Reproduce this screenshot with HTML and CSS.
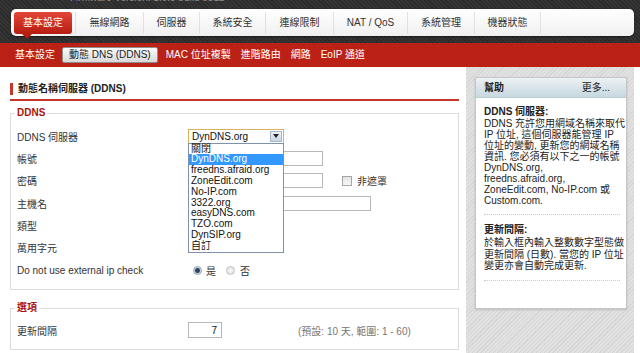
FILE: index.html
```html
<!DOCTYPE html>
<html lang="zh-Hant">
<head>
    <meta charset="UTF-8">
    <meta name="viewport" content="width=device-width, initial-scale=1.0">
    <title>動態 DNS (DDNS)</title>
    <link rel="stylesheet" href="styles.css">
</head>
<body>
    <div class="top">
        <div class="fw"><span>Firmware Version: 1.0.5 build 0812</span></div>
        <ul class="nav">
            <li class="on">基本設定</li>
            <li>無線網路</li>
            <li>伺服器</li>
            <li>系統安全</li>
            <li>連線限制</li>
            <li>NAT / QoS</li>
            <li>系統管理</li>
            <li>機器狀態</li>
        </ul>
    </div>

    <div class="subnav">
        <a href="#">基本設定</a>
        <a href="#" class="on">動態 DNS (DDNS)</a>
        <a href="#">MAC 位址複製</a>
        <a href="#">進階路由</a>
        <a href="#">網路</a>
        <a href="#">EoIP 通道</a>
    </div>

    <div class="page">
        <div class="main">
            <h2 class="title"><span>動態名稱伺服器 (DDNS)</span></h2>

            <fieldset>
                <legend>DDNS</legend>
                <div class="row">
                    <label>DDNS 伺服器</label>
                    <div class="select">
                        <span class="select-text">DynDNS.org</span>
                        <span class="select-btn"></span>
                        <!-- open list of the select -->
                        <ul class="dropdown">
                            <li>關閉</li>
                            <li class="sel">DynDNS.org</li>
                            <li>freedns.afraid.org</li>
                            <li>ZoneEdit.com</li>
                            <li>No-IP.com</li>
                            <li>3322.org</li>
                            <li>easyDNS.com</li>
                            <li>TZO.com</li>
                            <li>DynSIP.org</li>
                            <li>自訂</li>
                        </ul>
                    </div>
                </div>
                <div class="row">
                    <label>帳號</label>
                    <input class="txt" type="text">
                </div>
                <div class="row">
                    <label>密碼</label>
                    <input class="txt" type="password">
                    <input class="chk" type="checkbox">
                    <span>非遮罩</span>
                </div>
                <div class="row">
                    <label>主機名</label>
                    <input class="txt wide" type="text">
                </div>
                <div class="row">
                    <label>類型</label>
                </div>
                <div class="row">
                    <label>萬用字元</label>
                </div>
                <div class="row">
                    <label>Do not use external ip check</label>
                    <input class="rad" type="radio" name="ipcheck" checked>
                    <span>是</span>
                    <input class="rad no" type="radio" name="ipcheck">
                    <span class="no-label">否</span>
                </div>
            </fieldset>

            <fieldset class="opts">
                <legend>選項</legend>
                <div class="row">
                    <label>更新間隔</label>
                    <input class="txt num" type="text" value="7">
                    <span class="hint">(預設: 10 天, 範圍: 1 - 60)</span>
                </div>
            </fieldset>
        </div>

        <div class="side">
            <div class="help">
                <div class="help-head">
                    <b>幫助</b>
                    <a href="#">更多...</a>
                </div>
                <div class="help-body">
                    <h3>DDNS 伺服器:</h3>
                    <p>DDNS 充許您用網域名稱來取代<br>IP 位址, 這個伺服器能管理 IP<br>位址的變動, 更新您的網域名稱<br>資訊. 您必須有以下之一的帳號<br>DynDNS.org,<br>freedns.afraid.org,<br>ZoneEdit.com, No-IP.com 或<br>Custom.com.</p>
                    <hr>
                    <h3>更新間隔:</h3>
                    <p class="short">於輸入框內輸入整數數字型態做<br>更新間隔 (日數). 當您的 IP 位址<br>變更亦會自動完成更新.</p>
                    <hr>
                </div>
            </div>
        </div>
    </div>
</body>
</html>
```

FILE: styles.css
```css
* {
    box-sizing: border-box;
}
body {
    margin: 0;
    font-family: "Liberation Sans", "Noto Sans CJK TC", sans-serif;
    font-size: 10px;
    color: #333;
    background-color: #fff;
}

/* top bar */
.top {
    height: 43px;
    overflow: hidden;
    background: repeating-linear-gradient(45deg, #2a2a2a 0, #2a2a2a 1px, #343434 1px, #343434 3px);
}
.fw {
    height: 9px;
    padding-left: 70px;
    overflow: hidden;
    color: #8d8d8d;
    line-height: 10px;
}
.fw span {
    display: block;
    margin-top: -7px;
}
.nav {
    display: flex;
    height: 27px;
    margin: 0 6px 0 11px;
    padding: 3px 3px 2px;
    list-style: none;
    background: linear-gradient(#ffffff, #f0f0f0);
    border-radius: 5px;
    box-shadow: 0 1px 2px rgba(0, 0, 0, 0.5);
}
.nav li {
    height: 22px;
    line-height: 22px;
    text-align: center;
    color: #333;
    border-left: 1px solid #e1e1e1;
}
.nav li:nth-child(2) { width: 68px; }
.nav li:nth-child(3) { width: 56px; }
.nav li:nth-child(4) { width: 66px; }
.nav li:nth-child(5) { width: 68px; }
.nav li:nth-child(6) { width: 74px; }
.nav li:nth-child(7) { width: 67px; }
.nav li:nth-child(8) {
    width: 67px;
    border-right: 1px solid #e1e1e1;
}
.nav li.on {
    position: relative;
    width: 58px;
    margin-right: 3px;
    border: 0;
    border-radius: 3px;
    color: #fff;
    background: linear-gradient(#e2473a, #b71c11);
}
.nav li.on::after {
    content: "";
    position: absolute;
    left: 8px;
    top: 22px;
    border-left: 5px solid transparent;
    border-right: 5px solid transparent;
    border-top: 5px solid #b71c11;
}

/* second level menu */
.subnav {
    display: flex;
    align-items: center;
    height: 24px;
    padding-left: 15px;
    background-color: #bb2115;
}
.subnav a {
    margin-right: 10px;
    color: #fff;
    text-decoration: none;
    line-height: 14px;
}
.subnav a.on {
    height: 16px;
    margin: 0 8px 0 -3px;
    padding: 0 6px;
    color: #222;
    border: 1px solid #8e8e8e;
    border-radius: 2px;
    background: linear-gradient(#fafafa, #d9d9d9);
}

/* page */
.page {
    display: flex;
    height: 286px;
}
.main {
    width: 466px;
    padding: 0 7px 0 10px;
    background-color: #fff;
}
.title {
    margin: 16px 0 0;
    padding-bottom: 4px;
    font-size: 10px;
    border-bottom: 2px solid #c8352b;
}
.title span {
    display: block;
    padding-left: 5px;
    line-height: 12px;
    color: #222;
    border-left: 3px solid #c8352b;
}
fieldset {
    margin: 6px 0 0;
    padding: 6px 4px 8px;
    min-width: 0;
    border: 1px solid #dcdcdc;
}
fieldset.opts {
    margin-top: 12px;
    padding-top: 5px;
}
legend {
    padding: 0 2px;
    line-height: 12px;
    font-weight: bold;
    color: #a8150c;
}
.row {
    display: flex;
    align-items: center;
    height: 22.33px;
    padding-left: 2px;
}
.opts .row {
    height: 22px;
}
.row label {
    flex: none;
    width: 171px;
    color: #333;
}

/* select, opened */
.select {
    position: relative;
    display: flex;
    align-items: center;
    width: 96px;
    height: 15px;
    padding: 0 1px 0 3px;
    background-color: #fff;
    border: 1px solid #dcb15e;
}
.select-text {
    flex: 1;
    color: #111;
}
.select-btn {
    display: flex;
    align-items: center;
    justify-content: center;
    width: 12px;
    height: 11px;
    background: linear-gradient(#eef2f7, #c9d5e3);
    border: 1px solid #a7b8cc;
}
.select-btn::after {
    content: "";
    border-left: 3px solid transparent;
    border-right: 3px solid transparent;
    border-top: 4px solid #222;
}
.dropdown {
    position: absolute;
    z-index: 5;
    top: 100%;
    left: -1px;
    width: 96px;
    margin: 0;
    padding: 0;
    list-style: none;
    background-color: #fff;
    border: 1px solid #7d92ab;
}
.dropdown li {
    height: 10.8px;
    padding-left: 2px;
    line-height: 10.8px;
    color: #111;
}
.dropdown li.sel {
    color: #fff;
    background-color: #3399ff;
}

/* inputs */
.txt {
    width: 135px;
    height: 15px;
    padding: 0 3px;
    font: inherit;
    color: #111;
    background-color: #fff;
    border: 1px solid #b8b8b8;
}
.txt.wide {
    width: 183px;
}
.txt.num {
    width: 34px;
    height: 16px;
    text-align: right;
    padding-right: 4px;
}
.chk {
    appearance: none;
    width: 10px;
    height: 10px;
    margin: 0 5px 0 19px;
    border: 1px solid #a6a6a6;
    background: linear-gradient(#e4e4e4, #f8f8f8);
}
.rad {
    appearance: none;
    width: 9px;
    height: 9px;
    margin: 0 4px 0 5px;
    border-radius: 50%;
    border: 1px solid #c2c2c2;
    background: radial-gradient(circle, #f6f6f6 0, #dcdcdc 100%);
}
.rad:checked {
    border-color: #9aa7b5;
    background: radial-gradient(circle, #2e4863 0, #2e4863 2px, #c9d3de 3px, #f2f2f2 100%);
}
.rad.no {
    margin-left: 10px;
}
.no-label {
    margin-left: 1px;
}
.hint {
    margin-left: 76px;
    color: #777;
}

/* help column */
.side {
    width: 168px;
    padding: 10px 7px 0 9px;
    background: repeating-linear-gradient(-45deg, #d6d6d6 0, #d6d6d6 1px, #e1e1e1 1px, #e1e1e1 3px);
}
.help {
    background-color: #fff;
    border: 1px solid #c6c6c6;
    box-shadow: 0 1px 2px rgba(0, 0, 0, 0.15);
}
.help-head {
    display: flex;
    justify-content: space-between;
    height: 20px;
    padding: 0 16px 0 8px;
    line-height: 20px;
    color: #222;
    background: linear-gradient(#ecf2f5, #c6d8df);
    border-bottom: 1px solid #bccdd5;
}
.help-head a {
    color: #222;
    text-decoration: none;
}
.help-body {
    padding: 8px 6px 18px 8px;
    color: #222;
}
.help-body h3 {
    margin: 0;
    font-size: 10px;
    line-height: 12px;
}
.help-body p {
    margin: 0;
    line-height: 11px;
    white-space: nowrap;
}
.help-body p.short {
    margin-top: 1px;
    line-height: 11.5px;
}
.help-body hr {
    height: 0;
    margin: 8px 0 9px;
    border: 0;
    border-top: 1px dotted #c8c8c8;
}
```
